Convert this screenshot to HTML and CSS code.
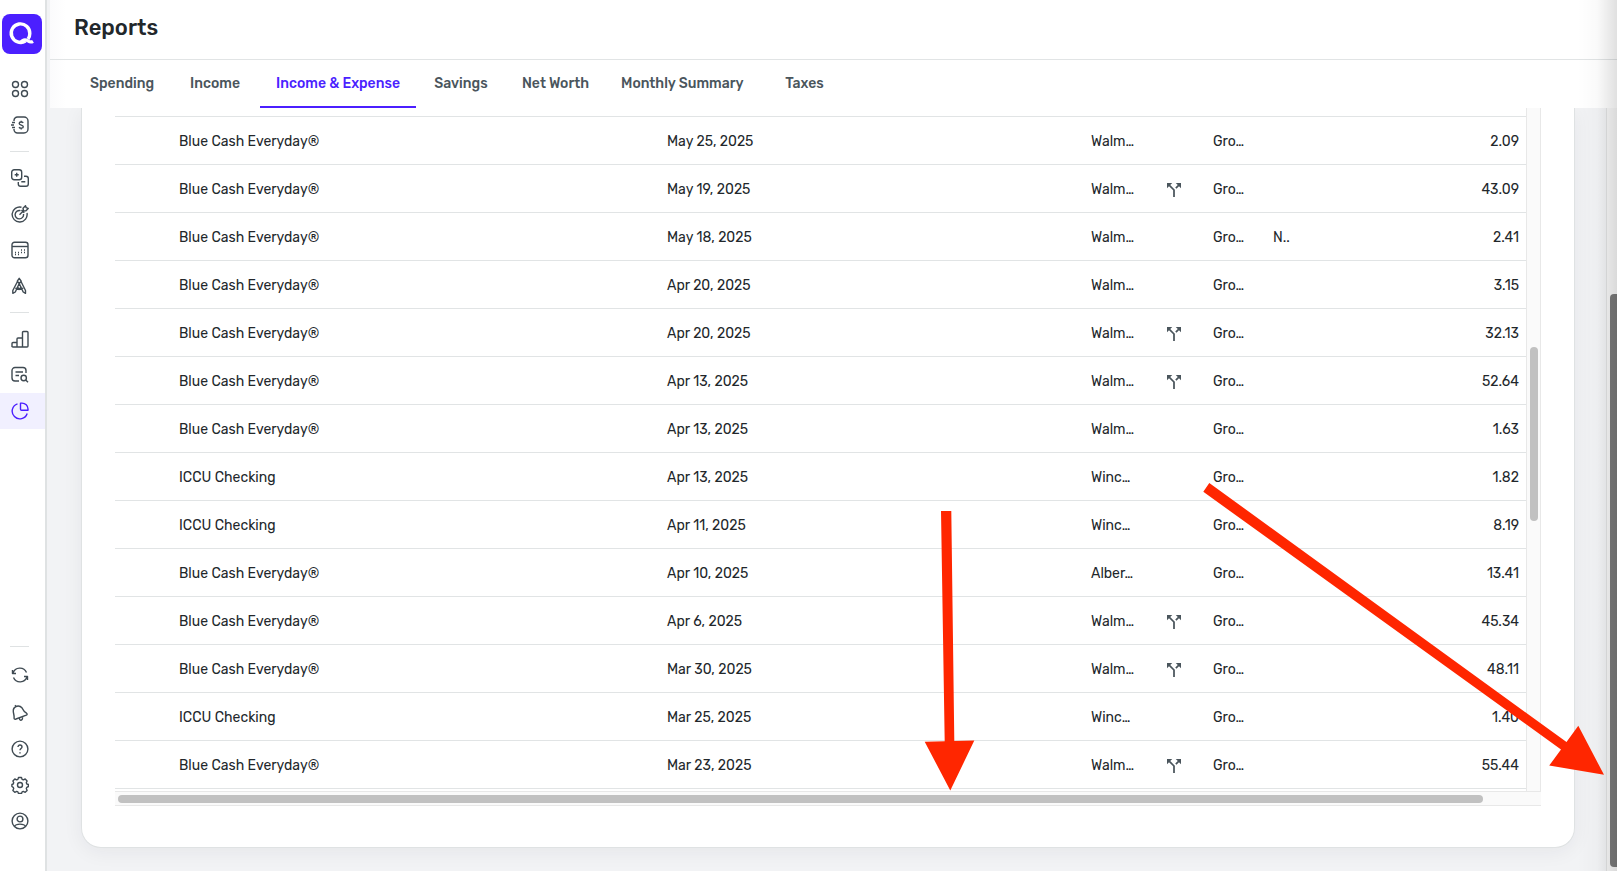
FILE: index.html
```html
<!DOCTYPE html>
<html lang="en">
<head>
  <meta charset="UTF-8">
  <meta name="viewport" content="width=device-width, initial-scale=1.0">
  <title>Reports</title>
  <link rel="stylesheet" href="styles.css">
</head>
<body>
  <!-- Sidebar -->
  <aside class="sidebar">
    <a class="logo" href="#" aria-label="Home">
      <svg viewBox="0 0 40 40" fill="none" stroke="#fff" stroke-width="3.4">
        <path d="M23.500 27A9.300 9.300 0 1 1 27.800 19.500C27.800 22 27.200 23.800 26 25.200"/>
        <path d="M18 29.200C20.500 25.800 23.500 25.300 26 27C28 28.300 29.500 28.300 31 27.300" stroke-width="3.200"/>
      </svg>
    </a>
    <nav class="menu" aria-label="Main">
      <a class="item" href="#" aria-label="Dashboard">
        <svg class="icon" viewBox="0 0 18 18"><circle cx="4.500" cy="4.500" r="3"/><circle cx="13.500" cy="4.500" r="3"/><circle cx="4.500" cy="13.500" r="3"/><circle cx="13.500" cy="13.500" r="3"/></svg>
      </a>
      <a class="item" href="#" aria-label="Spending">
        <svg class="icon" viewBox="0 0 18 18"><path d="M3 5V4.500A3.500 3.500 0 0 1 6.500 1H13a4 4 0 0 1 4 4v8a4 4 0 0 1-4 4H6.500A3.500 3.500 0 0 1 3 13.500V13M1 6.500h3M0 9h3M1 11.500h3"/><path d="M12.200 6.800C11.500 5.700 8.200 5.500 8.200 7.400S12.300 8.900 12.300 10.700 9 12.500 8 11.200M10.200 4.700v1.200M10.200 12.200v1.200"/></svg>
      </a>
      <hr>
      <a class="item" href="#" aria-label="Accounts">
        <svg class="icon" viewBox="0 0 18 18"><rect x="0.700" y="0.700" width="10" height="10" rx="2.500"/><path d="M5.700 3.700v4M3.700 5.700h4M13 7.300h2a2.300 2.300 0 0 1 2.300 2.300V15a2.300 2.300 0 0 1-2.300 2.300H9.600A2.300 2.300 0 0 1 7.300 15v-2M10.300 12.700h4"/></svg>
      </a>
      <a class="item" href="#" aria-label="Goals">
        <svg class="icon" viewBox="0 0 18 18"><path d="M10.500 2.200A7.500 7.500 0 1 0 16 8M9.500 5.600A4.200 4.200 0 1 0 12.500 9M8.500 9.700l4-4M12.500 5.700l-.5-2.500 2.500-2.500.7 2 2 .7-2.500 2.500zM10.500 5l2.800 2.800"/></svg>
      </a>
      <a class="item" href="#" aria-label="Calendar">
        <svg class="icon" viewBox="0 0 18 18"><rect x="1" y="1.200" width="16" height="15.600" rx="2.500"/><path d="M1 5.500h16"/><path d="M4 11.500h1M4 13.500h1M7 11.500h1M7 13.500h1M10 9h1M10 11.500h1M13 9h1M13 11.500h1"/></svg>
      </a>
      <a class="item" href="#" aria-label="Planning">
        <svg class="icon" viewBox="0 0 18 18"><path d="M6.500 4.500L1.800 13.500V16.300L4.300 15 8.200 6.500 12.200 15l2.300 1.300V13.500L10 4.500M8.200 1.300L6.300 4.200 8.200 6.500 10.200 4.200zM4.300 11c2.300 1.400 5.600 1.400 7.900 0M6.200 9.500L8.200 12.500l2.200-3"/></svg>
      </a>
      <hr>
      <a class="item" href="#" aria-label="Investments">
        <svg class="icon" viewBox="0 0 18 18"><path d="M1 17v-3.500q0-1 1-1h4V17M6 17V9q0-1 1-1h4.500v9M11.500 17V2.500q0-1 1-1H16q1 0 1 1V16q0 1-1 1H2q-1 0-1-1"/></svg>
      </a>
      <a class="item" href="#" aria-label="Transactions">
        <svg class="icon" viewBox="0 0 18 18"><path d="M8 15H4a3 3 0 0 1-3-3V4.500a3 3 0 0 1 3-3h8a3 3 0 0 1 3 3V7M4.500 6H12M4.500 9.500H8"/><circle cx="12.700" cy="12" r="2.700"/><path d="M14.700 14l2.300 2.300"/></svg>
      </a>
      <a class="item active" href="#" aria-label="Reports" aria-current="page">
        <svg class="icon" viewBox="0 0 18 18"><path d="M6.500 1.800A7.700 7.700 0 1 0 16.200 11.500"/><path d="M9.500 1.100H11a6 6 0 0 1 6 6v1.200H10.500q-1 0-1-1z"/></svg>
      </a>
    </nav>
    <nav class="menu menu-bottom" aria-label="Tools">
      <hr>
      <button class="item sync" type="button" aria-label="Sync">
        <svg class="icon" viewBox="0 0 18 18"><path d="M2 7.200A7.200 7.200 0 0 1 15.500 6.500M16 10.800A7.200 7.200 0 0 1 2.500 11.500M1.500 4v3.500H5M16.500 14v-3.500H13"/></svg>
      </button>
      <button class="item" type="button" aria-label="Notifications">
        <svg class="icon" viewBox="0 0 18 18"><path d="M5 2.500c3-1.500 6 .5 7 3 .8 2 1.500 2.500 3.500 3.700 1 .7.700 1.500-.2 2L5 15c-1.500.5-2 0-1.900-1.200C3.300 11 2.500 10 2.300 7.500 2.100 5.500 3 3.500 5 2.500zM5 2.500L4 1.200M8.500 14.500c0 2.500 3 2.500 3.200-1"/></svg>
      </button>
      <button class="item" type="button" aria-label="Help">
        <svg class="icon" viewBox="0 0 18 18"><circle cx="9" cy="9" r="7.900"/><path d="M7 7c0-2.700 4-2.500 4 0 0 1.500-2 1.600-2 3.300M9 12.200v1.200"/></svg>
      </button>
      <button class="item" type="button" aria-label="Settings">
        <svg class="icon" viewBox="0 0 18 18"><path d="M7.500 1.500h3l.6 1.900 1.200.5 1.900-.9 1.900 1.900-.8 1.900.5 1.200 1.600.5v2l-1.600.8-.5 1.200.8 1.900-1.900 1.900-1.900-.9-1.200.5-.6 1.600h-3l-.6-1.600-1.200-.5-1.900.9-1.900-1.900.8-1.900-.5-1.200L.9 10.500v-2l1.300-.5.5-1.200-.8-1.900L3.800 3l1.900.9 1.200-.5z"/><circle cx="9" cy="9" r="2.500"/></svg>
      </button>
      <button class="item" type="button" aria-label="Profile">
        <svg class="icon" viewBox="0 0 18 18"><circle cx="9" cy="9" r="7.900"/><circle cx="9" cy="7" r="2.900"/><path d="M3.500 14.400c1.500-3 9.500-3 11 0"/></svg>
      </button>
    </nav>
  </aside>

  <div class="page">
    <header class="header">
      <h1>Reports</h1>
    </header>
    <nav class="tabs" aria-label="Reports">
      <a href="#">Spending</a>
      <a href="#">Income</a>
      <a class="selected" href="#">Income &amp; Expense</a>
      <a href="#">Savings</a>
      <a href="#">Net Worth</a>
      <a href="#">Monthly Summary</a>
      <a href="#">Taxes</a>
    </nav>

    <main class="content">
      <section class="card">
        <div class="grid">
          <div class="rows">
            <table>
              <colgroup>
                <col class="c-indent"><col><col class="c-date"><col class="c-payee"><col class="c-split"><col class="c-category"><col class="c-note"><col class="c-amount">
              </colgroup>
              <tbody id="transactions"></tbody>
            </table>
          </div>
          <div class="track-v"><div class="thumb"></div></div>
        </div>
        <div class="track-h"><div class="thumb"></div></div>
      </section>
    </main>
  </div>

  <!-- Page scrollbar and window edge shadow -->
  <div class="page-scroll"><div class="page-thumb"></div></div>
  <div class="edge"></div>

  <!-- Arrows drawn over the page -->
  <svg class="arrows" viewBox="0 0 1617 871" aria-hidden="true">
    <path d="M941 511H951.300L954.300 741L974.300 740.600L950.300 790.500L924.700 741.700L944.700 741.200Z"/>
    <path d="M1203.300 491.800L1209.300 483L1566.500 742L1578.300 725.800L1604 774.800L1549.200 765.600L1561 749.500Z"/>
  </svg>

  <script>
    const card = 'Blue Cash Everyday®';
    const checking = 'ICCU Checking';

    // account, date, payee, split, note, amount
    const transactions = [
      [card, 'May 25, 2025', 'Walm…', false, '', '2.09'],
      [card, 'May 19, 2025', 'Walm…', true, '', '43.09'],
      [card, 'May 18, 2025', 'Walm…', false, 'N..', '2.41'],
      [card, 'Apr 20, 2025', 'Walm…', false, '', '3.15'],
      [card, 'Apr 20, 2025', 'Walm…', true, '', '32.13'],
      [card, 'Apr 13, 2025', 'Walm…', true, '', '52.64'],
      [card, 'Apr 13, 2025', 'Walm…', false, '', '1.63'],
      [checking, 'Apr 13, 2025', 'Winc…', false, '', '1.82'],
      [checking, 'Apr 11, 2025', 'Winc…', false, '', '8.19'],
      [card, 'Apr 10, 2025', 'Alber…', false, '', '13.41'],
      [card, 'Apr 6, 2025', 'Walm…', true, '', '45.34'],
      [card, 'Mar 30, 2025', 'Walm…', true, '', '48.11'],
      [checking, 'Mar 25, 2025', 'Winc…', false, '', '1.40'],
      [card, 'Mar 23, 2025', 'Walm…', true, '', '55.44']
    ];

    const splitIcon = '<svg class="split" viewBox="4 4 16 16" role="img" aria-label="Split"><path d="M14 4l2.290 2.290-2.880 2.880 1.420 1.420 2.880-2.880L20 10V4zM10 4H4v6l2.290-2.290 4.710 4.700V20h2v-8.410l-5.290-5.300z"/></svg>';

    document.getElementById('transactions').innerHTML = transactions.map(([account, date, payee, split, note, amount]) => `
      <tr>
        <td></td>
        <td>${account}</td>
        <td>${date}</td>
        <td>${payee}</td>
        <td>${split ? splitIcon : ''}</td>
        <td>Gro…</td>
        <td>${note}</td>
        <td class="amount">${amount}</td>
      </tr>`).join('');
  </script>
</body>
</html>
```
FILE: styles.css
```css
* {
  box-sizing: border-box;
}

body {
  display: flex;
  height: 100vh;
  margin: 0;
  overflow: hidden;
  position: relative;
  font-family: Rubik, Roboto, sans-serif;
  font-size: 14px;
  color: #22272b;
  background-color: #f2f3f5;
}

/* Sidebar */
.sidebar {
  display: flex;
  flex-direction: column;
  flex: none;
  width: 47px;
  padding: 14px 0 32px;
  background-color: #fff;
  border-right: 2px solid #dfe2e3;
}

.logo {
  width: 40px;
  height: 40px;
  margin: 0 0 17px 2px;
  background-color: #4b1fff;
  border-radius: 8px;
}

.menu {
  display: flex;
  flex-direction: column;
}

.menu-bottom {
  margin-top: auto;
}

.menu hr {
  width: 19px;
  height: 1px;
  margin: 8px 10px;
  border: 0;
  background-color: #dfe2e3;
}

.item {
  display: flex;
  align-items: center;
  height: 36px;
  padding: 0 0 0 11px;
  border: 0;
  background: none;
  color: #3f4a52;
  cursor: pointer;
}

.item.sync {
  height: 40px;
}

.item.active {
  background-color: #f1f0ff;
  color: #4b1fff;
}

.icon {
  width: 18px;
  height: 18px;
  fill: none;
  stroke: currentColor;
  stroke-width: 1.4;
  stroke-linejoin: round;
}

/* Header and tabs */
.page {
  display: flex;
  flex-direction: column;
  flex: 1;
  min-width: 0;
}

.header,
.tabs {
  flex: none;
  margin-left: 3px;
  background: linear-gradient(to right, #fbfbfc, #fff 16px);
}

.header {
  height: 60px;
  padding: 12px 24px;
  border-bottom: 1px solid #e1e4e5;
}

h1 {
  margin: 0;
  font-size: 22px;
  line-height: 32px;
  font-weight: 500;
}

.tabs {
  display: flex;
  height: 48px;
  padding-left: 24px;
}

.tabs a {
  min-width: 90px;
  padding: 0 16px;
  border-bottom: 2px solid transparent;
  line-height: 48px;
  font-weight: 500;
  text-align: center;
  text-decoration: none;
  color: #4a555c;
}

.tabs .selected {
  border-color: #4b1fff;
  color: #4b1fff;
}

/* Report */
.content {
  display: flex;
  flex: 1;
  min-height: 0;
  padding: 0 42px 23px 34px;
  overflow: hidden;
}

.card {
  display: flex;
  flex-direction: column;
  flex: 1;
  min-width: 0;
  padding: 0 33px 41px;
  border: 1px solid #dfe2e3;
  border-top: 0;
  border-radius: 0 0 20px 20px;
  background-color: #fff;
  box-shadow: 0 4px 20px rgba(30, 40, 50, 0.06);
}

.grid {
  display: flex;
  flex: 1;
  min-height: 0;
}

.rows {
  flex: 1;
  padding-top: 8px;
  overflow: hidden;
}

table {
  width: 100%;
  table-layout: fixed;
  border-collapse: collapse;
  border-top: 1px solid #e1e4e5;
}

td {
  height: 48px;
  padding: 2px 0 0;
  border-bottom: 1px solid #e1e4e5;
  white-space: nowrap;
}

.c-indent { width: 64px; }
.c-date { width: 424px; }
.c-payee { width: 76px; }
.c-split { width: 46px; }
.c-category { width: 60px; }
.c-note { width: 126px; }
.c-amount { width: 127px; }

.amount {
  padding-right: 7px;
  text-align: right;
}

.split {
  display: block;
  width: 14px;
  height: 14px;
  fill: #4a555c;
}

/* Scrollbars */
.track-v {
  width: 15px;
  padding: 239px 2px 0 3px;
  border: 1px solid #e8e8e8;
  border-width: 0 1px;
  background-color: #fafafa;
}

.track-v .thumb {
  height: 174px;
}

.track-h {
  height: 15px;
  padding: 3px 58px 3px 3px;
  border: 1px solid #e8e8e8;
  border-width: 1px 0;
  background-color: #fafafa;
}

.thumb {
  height: 8px;
  border-radius: 4px;
  background-color: #c1c1c1;
}

.page-scroll {
  position: absolute;
  top: 108px;
  right: 0;
  bottom: 0;
  width: 11px;
  padding: 186px 0 4px 3px;
  border-left: 1px solid #e2e3e4;
  background-color: #f8f8f8;
}

.page-thumb {
  height: 100%;
  border-radius: 4px 0 0 4px;
  background-color: #7b7b7b;
}

.edge {
  position: absolute;
  top: 0;
  right: 0;
  bottom: 0;
  width: 40px;
  background: linear-gradient(to right, rgba(0, 0, 0, 0), rgba(0, 0, 0, 0.02) 50%, rgba(0, 0, 0, 0.12));
  pointer-events: none;
}

.arrows {
  position: absolute;
  inset: 0;
  width: 100%;
  height: 100%;
  fill: #ff2600;
  pointer-events: none;
}
```
